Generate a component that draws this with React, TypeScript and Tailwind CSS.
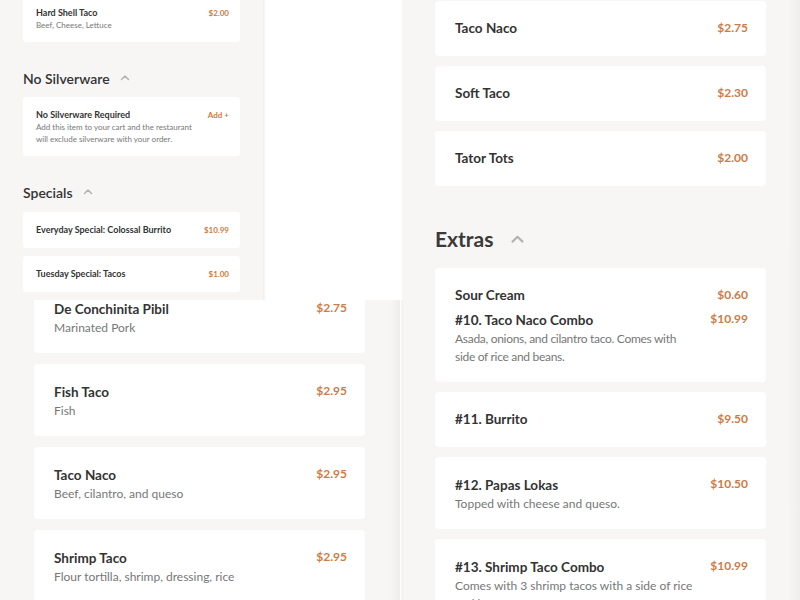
import { ReactNode } from "react";

type Item = {
  name: string;
  price: string;
  desc?: string;
  tight?: boolean;
};

const font = { fontFamily: "Lato, 'Open Sans', sans-serif" };

function Chevron({ size }: { size: number }) {
  return (
    <svg width={size} height={size} viewBox="0 0 24 24" fill="none" stroke="#b3b3b3" strokeWidth="3" strokeLinecap="round" strokeLinejoin="round">
      <polyline points="5 15 12 8 19 15" />
    </svg>
  );
}

// big cards (top-right and bottom tiles)
function Card({ item }: { item: Item }) {
  if (!item.desc) {
    return (
      <div className="flex h-[55px] items-center justify-between rounded bg-white pl-5 pr-[18px]">
        <p className="text-[13.5px] font-bold text-[#333]">{item.name}</p>
        <p className="-mt-[2px] text-[12px] font-bold text-[#cd7b45]">{item.price}</p>
      </div>
    );
  }
  return (
    <div className="flex justify-between rounded bg-white pb-4 pl-5 pr-[18px] pt-[18px]">
      <div className="w-[250px]">
        <p className="text-[13.5px] font-bold leading-[20px] text-[#333]">{item.name}</p>
        <p className={`text-[12px] leading-[18px] text-[#777] ${item.tight ? "max-w-[235px] tracking-[-0.3px]" : ""}`}>{item.desc}</p>
      </div>
      <p className="-mt-[1px] text-[12px] font-bold leading-[20px] text-[#cd7b45]">{item.price}</p>
    </div>
  );
}

function SmallCard({ item, className }: { item: Item; className: string }) {
  return (
    <div className={`flex justify-between rounded-[3px] bg-white pl-[13px] pr-[11px] ${className}`}>
      <div className="w-[165px]">
        <p className="text-[9px] font-bold leading-[12px] text-[#333]">{item.name}</p>
        {item.desc && <p className="text-[8px] leading-[12px] text-[#777]">{item.desc}</p>}
      </div>
      <p className="text-[8px] font-bold leading-[12px] text-[#cd7b45]">{item.price}</p>
    </div>
  );
}

function Tile({ children, className = "" }: { children: ReactNode; className?: string }) {
  return <div className={`flex h-[300px] w-[400px] overflow-hidden bg-[#f7f6f5] ${className}`}>{children}</div>;
}

const sides: Item[] = [
  { name: "Taco Naco", price: "$2.75" },
  { name: "Soft Taco", price: "$2.30" },
  { name: "Tator Tots", price: "$2.00" },
];

const tacos: Item[] = [
  { name: "De Conchinita Pibil", price: "$2.75", desc: "Marinated Pork" },
  { name: "Fish Taco", price: "$2.95", desc: "Fish" },
  { name: "Taco Naco", price: "$2.95", desc: "Beef, cilantro, and queso" },
  { name: "Shrimp Taco", price: "$2.95", desc: "Flour tortilla, shrimp, dressing, rice" },
];

const combos: Item[] = [
  { name: "#10. Taco Naco Combo", price: "$10.99", desc: "Asada, onions, and cilantro taco. Comes with side of rice and beans.", tight: true },
  { name: "#11. Burrito", price: "$9.50" },
  { name: "#12. Papas Lokas", price: "$10.50", desc: "Topped with cheese and queso." },
  { name: "#13. Shrimp Taco Combo", price: "$10.99", desc: "Comes with 3 shrimp tacos with a side of rice and beans." },
];

export default function App() {
  return (
    <div className="grid h-[600px] w-[800px] grid-cols-2 overflow-hidden bg-white" style={font}>
      {/* top left: narrow menu column */}
      <Tile className="bg-white">
        <div className="w-[263px] shrink-0 bg-[#f7f6f5] px-[23px]">
          <SmallCard
            item={{ name: "Hard Shell Taco", price: "$2.00", desc: "Beef, Cheese, Lettuce" }}
            className="-mt-[3px] pb-[11px] pt-[10px]"
          />
          <div className="mb-[9px] mt-[26px] flex h-[20px] items-center gap-[9px]">
            <h3 className="text-[14px] font-semibold text-[#333]">No Silverware</h3>
            <Chevron size={12} />
          </div>
          <div className="flex justify-between rounded-[3px] bg-white pb-[11px] pl-[13px] pr-[11px] pt-[12px]">
            <div className="w-[165px]">
              <p className="text-[9px] font-bold leading-[12px] text-[#333]">No Silverware Required</p>
              <p className="text-[8px] leading-[12px] text-[#777]">
                Add this item to your cart and the restaurant will exclude silverware with your order.
              </p>
            </div>
            <p className="text-[8px] font-bold leading-[12px] text-[#cd7b45]">Add +</p>
          </div>
          <div className="mb-[10px] mt-[26px] flex h-[20px] items-center gap-[9px]">
            <h3 className="text-[14px] font-semibold text-[#333]">Specials</h3>
            <Chevron size={12} />
          </div>
          <div className="flex flex-col gap-[8px]">
            <SmallCard item={{ name: "Everyday Special: Colossal Burrito", price: "$10.99" }} className="pb-[12px] pt-[12px]" />
            <SmallCard item={{ name: "Tuesday Special: Tacos", price: "$1.00" }} className="pb-[12px] pt-[12px]" />
            <SmallCard item={{ name: "Tuesday Special: Tortas", price: "$5.00" }} className="pb-[12px] pt-[12px]" />
          </div>
        </div>
        <div className="w-[3px] shrink-0 bg-gradient-to-r from-[#eeeeec] to-white" />
        <div className="flex-1 bg-white" />
      </Tile>

      {/* top right: sides and extras */}
      <Tile>
        <div className="w-[2px] shrink-0 bg-white" />
        <div className="flex-1 pl-[33px] pr-[22px]">
          <div className="mt-[1px] flex flex-col gap-[10px]">
            {sides.map((s) => (
              <Card key={s.name} item={s} />
            ))}
          </div>
          <div className="mb-[15px] mt-[39px] flex h-[28px] items-center gap-[16px]">
            <h2 className="text-[21px] font-bold text-[#3a3a3a]">Extras</h2>
            <Chevron size={17} />
          </div>
          <Card item={{ name: "Sour Cream", price: "$0.60" }} />
        </div>
        <div className="w-[12px] shrink-0 bg-gradient-to-r from-[#f7f6f5] to-[#efeeec]" />
      </Tile>

      {/* bottom left: tacos */}
      <Tile>
        <div className="flex-1 pl-[34px] pr-[25px]">
          <div className="-mt-[19px] flex flex-col gap-[11px]">
            {tacos.map((t) => (
              <Card key={t.name} item={t} />
            ))}
          </div>
        </div>
        <div className="w-[10px] shrink-0 bg-gradient-to-r from-[#f7f6f5] to-[#eeedeb]" />
      </Tile>

      {/* bottom right: combos */}
      <Tile>
        <div className="w-[3px] shrink-0 bg-gradient-to-r from-white to-[#efeeec]" />
        <div className="flex-1 pl-[32px] pr-[22px]">
          <div className="-mt-[8px] flex flex-col gap-[10px]">
            {combos.map((c) => (
              <Card key={c.name} item={c} />
            ))}
          </div>
        </div>
        <div className="w-[12px] shrink-0 bg-gradient-to-r from-[#f7f6f5] to-[#efeeec]" />
      </Tile>
    </div>
  );
}
